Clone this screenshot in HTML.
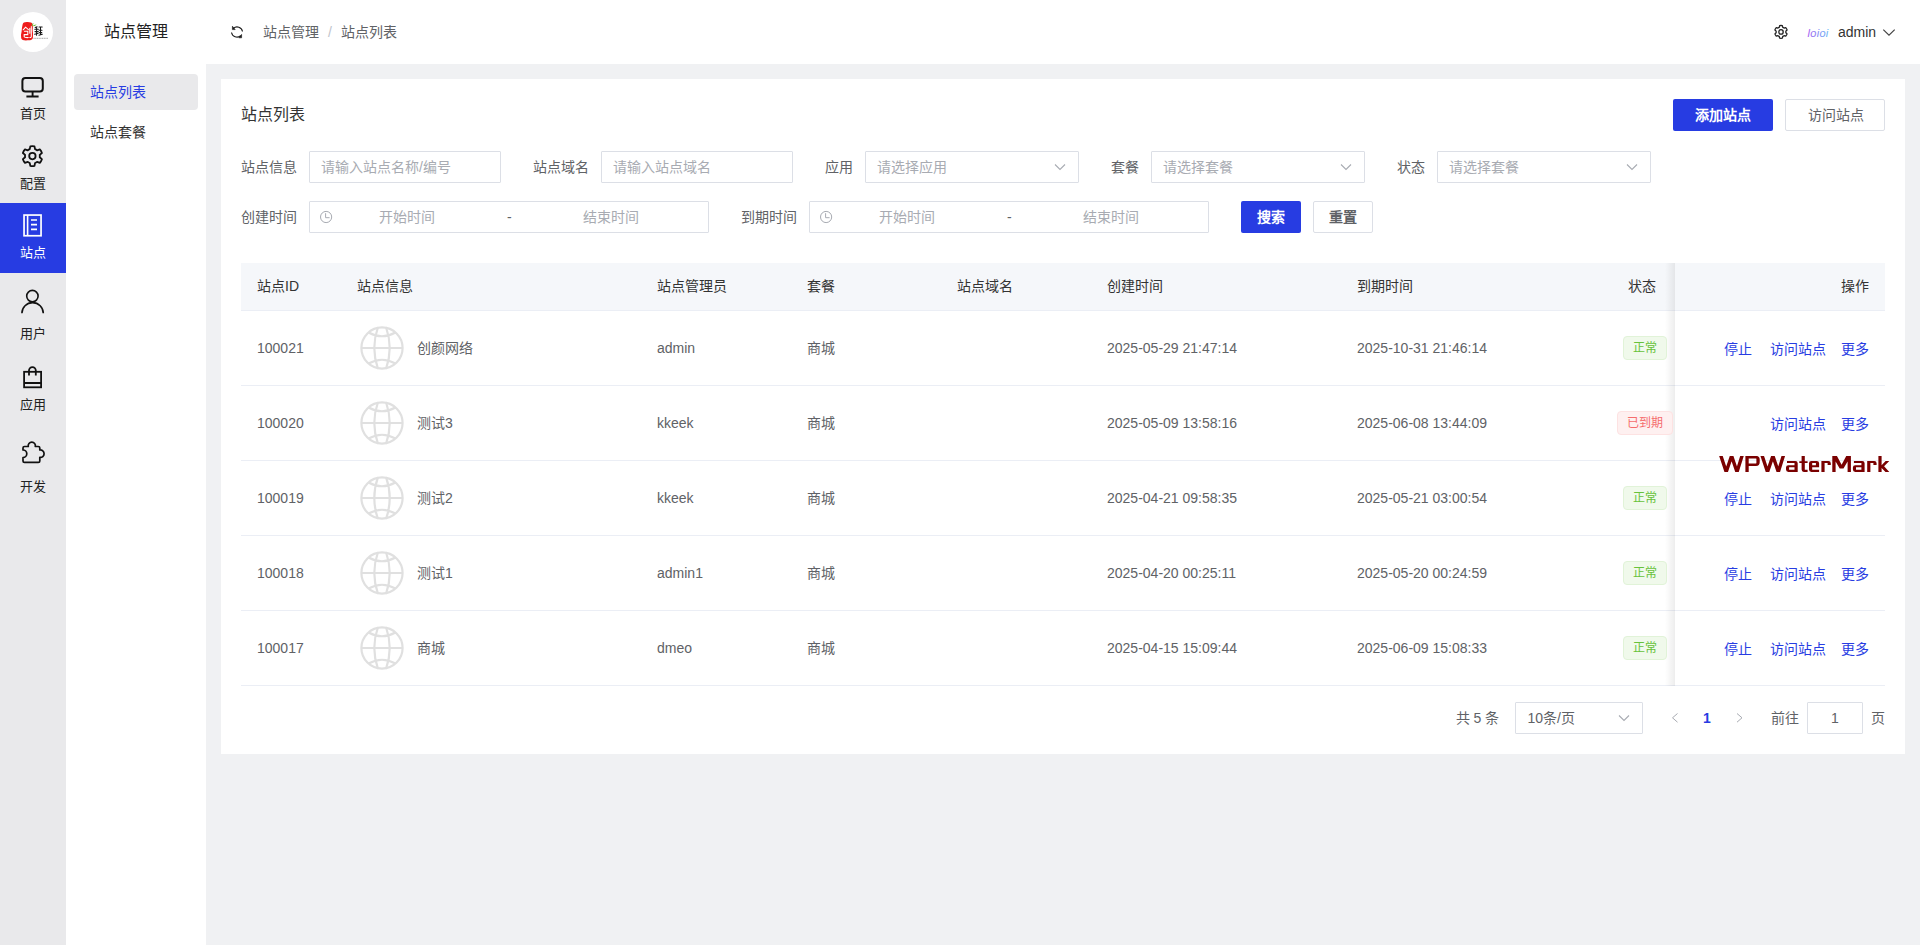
<!DOCTYPE html>
<html lang="zh-CN">
<head>
<meta charset="utf-8">
<style>
*{box-sizing:border-box;margin:0;padding:0}
html,body{width:1920px;height:945px;overflow:hidden;background:#fff}
body{font-family:"Liberation Sans",sans-serif;font-size:14px;color:#333;position:relative}
.a{position:absolute;white-space:nowrap}
svg{position:absolute;left:0;top:0}
</style>
</head>
<body>
<div class="a" style="left:0px;top:0px;width:66px;height:945px;background:#e9e9eb"></div>
<div class="a" style="left:206px;top:64px;width:1714px;height:881px;background:#f0f1f3"></div>
<div class="a" style="left:221px;top:79px;width:1684px;height:675px;background:#fff"></div>
<div class="a" style="left:0px;top:203px;width:66px;height:70px;background:#273ce2"></div>
<div class="a" style="left:2.5px;width:60px;top:104.6px;font-size:13px;line-height:18px;color:#222;text-align:center;">首页</div>
<div class="a" style="left:2.5px;width:60px;top:174.5px;font-size:13px;line-height:18px;color:#222;text-align:center;">配置</div>
<div class="a" style="left:2.5px;width:60px;top:243.6px;font-size:13px;line-height:18px;color:#fff;text-align:center;">站点</div>
<div class="a" style="left:2.5px;width:60px;top:325.4px;font-size:13px;line-height:18px;color:#222;text-align:center;">用户</div>
<div class="a" style="left:2.5px;width:60px;top:395.6px;font-size:13px;line-height:18px;color:#222;text-align:center;">应用</div>
<div class="a" style="left:2.5px;width:60px;top:478px;font-size:13px;line-height:18px;color:#222;text-align:center;">开发</div>
<div class="a" style="left:104px;top:21px;font-size:16px;line-height:22px;color:#222;">站点管理</div>
<div class="a" style="left:263px;top:22px;font-size:14px;line-height:20px;color:#606266;">站点管理</div>
<div class="a" style="left:328px;top:22px;font-size:14px;line-height:20px;color:#c0c4cc;">/</div>
<div class="a" style="left:341px;top:22px;font-size:14px;line-height:20px;color:#606266;">站点列表</div>
<div class="a" style="left:1838px;top:22px;font-size:14px;line-height:20px;color:#333;">admin</div>
<div class="a" style="left:74px;top:74px;width:124px;height:36px;background:#e9e9eb;border-radius:4px"></div>
<div class="a" style="left:90px;top:82.2px;font-size:14px;line-height:20px;color:#273ce2;">站点列表</div>
<div class="a" style="left:90px;top:122px;font-size:14px;line-height:20px;color:#333;">站点套餐</div>
<div class="a" style="left:241px;top:104px;font-size:16px;line-height:22px;color:#333;">站点列表</div>
<div class="a" style="left:1673px;top:99px;width:100px;height:32px;background:#273ce2;border-radius:2px"></div>
<div class="a" style="left:1695px;top:105.3px;font-size:14px;line-height:20px;color:#fff;font-weight:bold">添加站点</div>
<div class="a" style="left:1785px;top:99px;width:100px;height:32px;border:1px solid #dcdfe6;border-radius:2px;background:#fff"></div>
<div class="a" style="left:1807.5px;top:104.8px;font-size:14px;line-height:20px;color:#606266;">访问站点</div>
<div class="a" style="left:241px;top:157px;font-size:14px;line-height:20px;color:#606266;">站点信息</div>
<div class="a" style="left:309px;top:151px;width:192px;height:32px;border:1px solid #dcdfe6;border-radius:1px;background:#fff"></div>
<div class="a" style="left:321px;top:157px;font-size:14px;line-height:20px;color:#a8abb2;">请输入站点名称/编号</div>
<div class="a" style="left:533px;top:157px;font-size:14px;line-height:20px;color:#606266;">站点域名</div>
<div class="a" style="left:601px;top:151px;width:192px;height:32px;border:1px solid #dcdfe6;border-radius:1px;background:#fff"></div>
<div class="a" style="left:613px;top:157px;font-size:14px;line-height:20px;color:#a8abb2;">请输入站点域名</div>
<div class="a" style="left:825px;top:157px;font-size:14px;line-height:20px;color:#606266;">应用</div>
<div class="a" style="left:865px;top:151px;width:214px;height:32px;border:1px solid #dcdfe6;border-radius:1px;background:#fff"></div>
<div class="a" style="left:877px;top:157px;font-size:14px;line-height:20px;color:#a8abb2;">请选择应用</div>
<div class="a" style="left:1111px;top:157px;font-size:14px;line-height:20px;color:#606266;">套餐</div>
<div class="a" style="left:1151px;top:151px;width:214px;height:32px;border:1px solid #dcdfe6;border-radius:1px;background:#fff"></div>
<div class="a" style="left:1163px;top:157px;font-size:14px;line-height:20px;color:#a8abb2;">请选择套餐</div>
<div class="a" style="left:1397px;top:157px;font-size:14px;line-height:20px;color:#606266;">状态</div>
<div class="a" style="left:1437px;top:151px;width:214px;height:32px;border:1px solid #dcdfe6;border-radius:1px;background:#fff"></div>
<div class="a" style="left:1449px;top:157px;font-size:14px;line-height:20px;color:#a8abb2;">请选择套餐</div>
<div class="a" style="left:241px;top:207.3px;font-size:14px;line-height:20px;color:#606266;">创建时间</div>
<div class="a" style="left:309px;top:201px;width:400px;height:32px;border:1px solid #dcdfe6;border-radius:1px;background:#fff"></div>
<div class="a" style="left:379px;top:207px;font-size:14px;line-height:20px;color:#a8abb2;">开始时间</div>
<div class="a" style="left:507px;top:207px;font-size:14px;line-height:20px;color:#606266;">-</div>
<div class="a" style="left:583px;top:207px;font-size:14px;line-height:20px;color:#a8abb2;">结束时间</div>
<div class="a" style="left:741px;top:207.3px;font-size:14px;line-height:20px;color:#606266;">到期时间</div>
<div class="a" style="left:809px;top:201px;width:400px;height:32px;border:1px solid #dcdfe6;border-radius:1px;background:#fff"></div>
<div class="a" style="left:879px;top:207px;font-size:14px;line-height:20px;color:#a8abb2;">开始时间</div>
<div class="a" style="left:1007px;top:207px;font-size:14px;line-height:20px;color:#606266;">-</div>
<div class="a" style="left:1083px;top:207px;font-size:14px;line-height:20px;color:#a8abb2;">结束时间</div>
<div class="a" style="left:1241px;top:201px;width:60px;height:32px;background:#273ce2;border-radius:2px"></div>
<div class="a" style="left:1257px;top:207px;font-size:14px;line-height:20px;color:#fff;font-weight:bold">搜索</div>
<div class="a" style="left:1313px;top:201px;width:60px;height:32px;border:1px solid #dcdfe6;border-radius:2px;background:#fff"></div>
<div class="a" style="left:1329px;top:207px;font-size:14px;line-height:20px;color:#606266;font-weight:bold">重置</div>
<div class="a" style="left:241px;top:263px;width:1644px;height:47px;background:#f5f7fa"></div>
<div class="a" style="left:241px;top:310px;width:1644px;height:1px;background:#ebeef5"></div>
<div class="a" style="left:241px;top:385px;width:1644px;height:1px;background:#ebeef5"></div>
<div class="a" style="left:241px;top:460px;width:1644px;height:1px;background:#ebeef5"></div>
<div class="a" style="left:241px;top:535px;width:1644px;height:1px;background:#ebeef5"></div>
<div class="a" style="left:241px;top:610px;width:1644px;height:1px;background:#ebeef5"></div>
<div class="a" style="left:241px;top:685px;width:1644px;height:1px;background:#ebeef5"></div>
<div class="a" style="left:1665px;top:263px;width:10px;height:423px;background:linear-gradient(to right, rgba(0,0,0,0), rgba(0,0,0,0.07))"></div>
<div class="a" style="left:1675px;top:263px;width:210px;height:47px;background:#f5f7fa"></div>
<div class="a" style="left:1675px;top:311px;width:210px;height:374px;background:#fff"></div>
<div class="a" style="left:1675px;top:385px;width:210px;height:1px;background:#ebeef5"></div>
<div class="a" style="left:1675px;top:460px;width:210px;height:1px;background:#ebeef5"></div>
<div class="a" style="left:1675px;top:535px;width:210px;height:1px;background:#ebeef5"></div>
<div class="a" style="left:1675px;top:610px;width:210px;height:1px;background:#ebeef5"></div>
<div class="a" style="left:1675px;top:685px;width:210px;height:1px;background:#ebeef5"></div>
<div class="a" style="left:257px;top:276.3px;font-size:14px;line-height:20px;color:#333;">站点ID</div>
<div class="a" style="left:357px;top:276.3px;font-size:14px;line-height:20px;color:#333;">站点信息</div>
<div class="a" style="left:657px;top:276.3px;font-size:14px;line-height:20px;color:#333;">站点管理员</div>
<div class="a" style="left:807px;top:276.3px;font-size:14px;line-height:20px;color:#333;">套餐</div>
<div class="a" style="left:957px;top:276.3px;font-size:14px;line-height:20px;color:#333;">站点域名</div>
<div class="a" style="left:1107px;top:276.3px;font-size:14px;line-height:20px;color:#333;">创建时间</div>
<div class="a" style="left:1357px;top:276.3px;font-size:14px;line-height:20px;color:#333;">到期时间</div>
<div class="a" style="right:264.5px;top:276.3px;font-size:14px;line-height:20px;color:#333;text-align:right;">状态</div>
<div class="a" style="right:51px;top:276.3px;font-size:14px;line-height:20px;color:#333;text-align:right;">操作</div>
<div class="a" style="left:257px;top:338px;font-size:14px;line-height:20px;color:#606266;">100021</div>
<div class="a" style="left:417px;top:338px;font-size:14px;line-height:20px;color:#606266;">创颜网络</div>
<div class="a" style="left:657px;top:338px;font-size:14px;line-height:20px;color:#606266;">admin</div>
<div class="a" style="left:807px;top:338px;font-size:14px;line-height:20px;color:#606266;">商城</div>
<div class="a" style="left:1107px;top:338px;font-size:14px;line-height:20px;color:#606266;">2025-05-29 21:47:14</div>
<div class="a" style="left:1357px;top:338px;font-size:14px;line-height:20px;color:#606266;">2025-10-31 21:46:14</div>
<div class="a" style="left:1623px;top:336px;width:44px;height:24px;background:#f0f9eb;border:1px solid #e1f3d8;border-radius:4px"></div>
<div class="a" style="left:1633px;top:340px;font-size:12px;line-height:16px;color:#67c23a;">正常</div>
<div class="a" style="left:1724px;top:339px;font-size:14px;line-height:20px;color:#273ce2;">停止</div>
<div class="a" style="left:1770px;top:339px;font-size:14px;line-height:20px;color:#273ce2;">访问站点</div>
<div class="a" style="left:1841px;top:339px;font-size:14px;line-height:20px;color:#273ce2;">更多</div>
<div class="a" style="left:257px;top:413px;font-size:14px;line-height:20px;color:#606266;">100020</div>
<div class="a" style="left:417px;top:413px;font-size:14px;line-height:20px;color:#606266;">测试3</div>
<div class="a" style="left:657px;top:413px;font-size:14px;line-height:20px;color:#606266;">kkeek</div>
<div class="a" style="left:807px;top:413px;font-size:14px;line-height:20px;color:#606266;">商城</div>
<div class="a" style="left:1107px;top:413px;font-size:14px;line-height:20px;color:#606266;">2025-05-09 13:58:16</div>
<div class="a" style="left:1357px;top:413px;font-size:14px;line-height:20px;color:#606266;">2025-06-08 13:44:09</div>
<div class="a" style="left:1617px;top:411px;width:56px;height:24px;background:#fef0f0;border:1px solid #fde2e2;border-radius:4px"></div>
<div class="a" style="left:1627px;top:415px;font-size:12px;line-height:16px;color:#f56c6c;">已到期</div>
<div class="a" style="left:1770px;top:414px;font-size:14px;line-height:20px;color:#273ce2;">访问站点</div>
<div class="a" style="left:1841px;top:414px;font-size:14px;line-height:20px;color:#273ce2;">更多</div>
<div class="a" style="left:257px;top:488px;font-size:14px;line-height:20px;color:#606266;">100019</div>
<div class="a" style="left:417px;top:488px;font-size:14px;line-height:20px;color:#606266;">测试2</div>
<div class="a" style="left:657px;top:488px;font-size:14px;line-height:20px;color:#606266;">kkeek</div>
<div class="a" style="left:807px;top:488px;font-size:14px;line-height:20px;color:#606266;">商城</div>
<div class="a" style="left:1107px;top:488px;font-size:14px;line-height:20px;color:#606266;">2025-04-21 09:58:35</div>
<div class="a" style="left:1357px;top:488px;font-size:14px;line-height:20px;color:#606266;">2025-05-21 03:00:54</div>
<div class="a" style="left:1623px;top:486px;width:44px;height:24px;background:#f0f9eb;border:1px solid #e1f3d8;border-radius:4px"></div>
<div class="a" style="left:1633px;top:490px;font-size:12px;line-height:16px;color:#67c23a;">正常</div>
<div class="a" style="left:1724px;top:489px;font-size:14px;line-height:20px;color:#273ce2;">停止</div>
<div class="a" style="left:1770px;top:489px;font-size:14px;line-height:20px;color:#273ce2;">访问站点</div>
<div class="a" style="left:1841px;top:489px;font-size:14px;line-height:20px;color:#273ce2;">更多</div>
<div class="a" style="left:257px;top:563px;font-size:14px;line-height:20px;color:#606266;">100018</div>
<div class="a" style="left:417px;top:563px;font-size:14px;line-height:20px;color:#606266;">测试1</div>
<div class="a" style="left:657px;top:563px;font-size:14px;line-height:20px;color:#606266;">admin1</div>
<div class="a" style="left:807px;top:563px;font-size:14px;line-height:20px;color:#606266;">商城</div>
<div class="a" style="left:1107px;top:563px;font-size:14px;line-height:20px;color:#606266;">2025-04-20 00:25:11</div>
<div class="a" style="left:1357px;top:563px;font-size:14px;line-height:20px;color:#606266;">2025-05-20 00:24:59</div>
<div class="a" style="left:1623px;top:561px;width:44px;height:24px;background:#f0f9eb;border:1px solid #e1f3d8;border-radius:4px"></div>
<div class="a" style="left:1633px;top:565px;font-size:12px;line-height:16px;color:#67c23a;">正常</div>
<div class="a" style="left:1724px;top:564px;font-size:14px;line-height:20px;color:#273ce2;">停止</div>
<div class="a" style="left:1770px;top:564px;font-size:14px;line-height:20px;color:#273ce2;">访问站点</div>
<div class="a" style="left:1841px;top:564px;font-size:14px;line-height:20px;color:#273ce2;">更多</div>
<div class="a" style="left:257px;top:638px;font-size:14px;line-height:20px;color:#606266;">100017</div>
<div class="a" style="left:417px;top:638px;font-size:14px;line-height:20px;color:#606266;">商城</div>
<div class="a" style="left:657px;top:638px;font-size:14px;line-height:20px;color:#606266;">dmeo</div>
<div class="a" style="left:807px;top:638px;font-size:14px;line-height:20px;color:#606266;">商城</div>
<div class="a" style="left:1107px;top:638px;font-size:14px;line-height:20px;color:#606266;">2025-04-15 15:09:44</div>
<div class="a" style="left:1357px;top:638px;font-size:14px;line-height:20px;color:#606266;">2025-06-09 15:08:33</div>
<div class="a" style="left:1623px;top:636px;width:44px;height:24px;background:#f0f9eb;border:1px solid #e1f3d8;border-radius:4px"></div>
<div class="a" style="left:1633px;top:640px;font-size:12px;line-height:16px;color:#67c23a;">正常</div>
<div class="a" style="left:1724px;top:639px;font-size:14px;line-height:20px;color:#273ce2;">停止</div>
<div class="a" style="left:1770px;top:639px;font-size:14px;line-height:20px;color:#273ce2;">访问站点</div>
<div class="a" style="left:1841px;top:639px;font-size:14px;line-height:20px;color:#273ce2;">更多</div>
<div class="a" style="left:1455.5px;top:708px;font-size:14px;line-height:20px;color:#606266;">共 5 条</div>
<div class="a" style="left:1515px;top:702px;width:128px;height:32px;border:1px solid #dcdfe6;border-radius:1px;background:#fff"></div>
<div class="a" style="left:1527.5px;top:708px;font-size:14px;line-height:20px;color:#606266;">10条/页</div>
<div class="a" style="left:1703px;top:708.3px;font-size:14px;line-height:20px;color:#273ce2;font-weight:bold">1</div>
<div class="a" style="left:1771px;top:708px;font-size:14px;line-height:20px;color:#606266;">前往</div>
<div class="a" style="left:1807px;top:702px;width:56px;height:32px;border:1px solid #dcdfe6;border-radius:1px;background:#fff"></div>
<div class="a" style="left:1815.0px;width:40px;top:708px;font-size:14px;line-height:20px;color:#606266;text-align:center;">1</div>
<div class="a" style="left:1871px;top:708px;font-size:14px;line-height:20px;color:#606266;">页</div>
<svg width="1920" height="945" viewBox="0 0 1920 945">
<circle cx="33" cy="32" r="20" fill="#fff"/>
<path d="M22.6 24.5Q23.2 22 27 22.1Q31.6 21.9 32.6 24Q33.2 27 32.6 30Q33.4 34 32.9 38Q32.2 40.6 27.5 40.3Q22.2 40.8 21.2 38.2Q20.6 35 21.6 31.5Q21.9 27.5 22.6 24.5Z" fill="#ee1c1c"/>
<path d="M23.2 29.8L25.6 27.2L28.4 29.6M24.4 31.3H27.8V34.6H24.2V36.8Q24.6 37.8 28.3 37.6M29.8 28.2V33.2M31.3 26.6V36.3Q31.2 37.9 29.8 37.5" fill="none" stroke="#fff" stroke-width="1.05" stroke-linecap="round"/>
<path d="M31.6 26.2Q31.8 23.6 33.6 23.1Q33.4 25.4 31.6 26.2ZM32.2 26.3Q34.1 24.2 36.6 24.4Q34.9 26.6 32.2 26.3Z" fill="#6cbf3a"/>
<path d="M35.2 27.6L37.1 26.8M34.8 29.3H38.4M36.6 27.5V35.2M35 31.6H38.3M34.6 34.2L38.3 33.2M39 27H42.2M40.5 27V34.5M39.2 30.2H42M39.4 32.6H41.8M38.9 35.2L42.3 34.2" fill="none" stroke="#1a1a1a" stroke-width="1.05" stroke-linecap="round"/>
<path d="M33.5 38.3H48" stroke="#9a9a9a" stroke-width="0.9" stroke-dasharray="1.2 0.5"/>
<rect x="22.4" y="78" width="20.4" height="13.4" rx="3" fill="none" stroke="#111" stroke-width="2"/>
<path d="M32.6 91.4V96.5M26.4 96.5H38.6" fill="none" stroke="#111" stroke-width="1.9"/>
<path d="M29.75 149.19L30.32 146.32A10.0 10.0 0 0 1 34.48 146.32L35.05 149.19A7.4 7.4 0 0 1 37.06 150.35L39.83 149.41A10.0 10.0 0 0 1 41.91 153.01L39.71 154.94A7.4 7.4 0 0 1 39.71 157.26L41.91 159.19A10.0 10.0 0 0 1 39.83 162.79L37.06 161.85A7.4 7.4 0 0 1 35.05 163.01L34.48 165.88A10.0 10.0 0 0 1 30.32 165.88L29.75 163.01A7.4 7.4 0 0 1 27.74 161.85L24.97 162.79A10.0 10.0 0 0 1 22.89 159.19L25.09 157.26A7.4 7.4 0 0 1 25.09 154.94L22.89 153.01A10.0 10.0 0 0 1 24.97 149.41L27.74 150.35A7.4 7.4 0 0 1 29.75 149.19Z" fill="none" stroke="#111" stroke-width="1.8" stroke-linejoin="round"/>
<circle cx="32.4" cy="156.1" r="3.2" fill="none" stroke="#111" stroke-width="1.8"/>
<rect x="24.05" y="215.05" width="17" height="20.7" fill="none" stroke="#fff" stroke-width="1.7"/>
<path d="M27.6 215V236M31 220H37M31 224.6H37M31 229.4H37" fill="none" stroke="#fff" stroke-width="1.6"/>
<circle cx="32.4" cy="296.1" r="5.7" fill="none" stroke="#111" stroke-width="1.6"/>
<path d="M21.9 313.2A10.7 10.6 0 0 1 43.3 313.2" fill="none" stroke="#111" stroke-width="1.6"/>
<rect x="24.1" y="371.8" width="17" height="15.5" fill="none" stroke="#111" stroke-width="1.8"/>
<path d="M24.1 383H41.1M29 375.4V370.5A3.4 3.4 0 0 1 35.8 370.5V375.4" fill="none" stroke="#111" stroke-width="1.8"/>
<path d="M24.5 446.5H28.3A3.6 3.6 0 1 1 35.3 446.5H38.3A1.5 1.5 0 0 1 39.8 448V450A3.74 3.74 0 1 1 39.8 457.4V460.9A1.5 1.5 0 0 1 38.3 462.4H24.5A1.5 1.5 0 0 1 23 460.9V457.6A3.8 3.8 0 1 0 23 450V448A1.5 1.5 0 0 1 24.5 446.5Z" fill="none" stroke="#111" stroke-width="1.7" stroke-linejoin="round"/>
<path d="M233.4 28.3A5.5 5.5 0 0 1 242.5 31.5M231.5 32.5A5.5 5.5 0 0 0 240.6 35.7" fill="none" stroke="#1a1a1a" stroke-width="1.1"/>
<path d="M232.4 26.2L232.4 29.6L235.2 29.6ZM241.6 37.8L241.6 34.4L238.8 37.8Z" fill="#1a1a1a" stroke="#1a1a1a" stroke-width="0.6" stroke-linejoin="round"/>
<path d="M1779.24 27.33L1779.67 25.64A6.4 6.4 0 0 1 1782.33 25.64L1782.76 27.33A4.9 4.9 0 0 1 1784.08 28.09L1785.76 27.62A6.4 6.4 0 0 1 1787.09 29.92L1785.84 31.13A4.9 4.9 0 0 1 1785.84 32.67L1787.09 33.88A6.4 6.4 0 0 1 1785.76 36.18L1784.08 35.71A4.9 4.9 0 0 1 1782.76 36.47L1782.33 38.16A6.4 6.4 0 0 1 1779.67 38.16L1779.24 36.47A4.9 4.9 0 0 1 1777.92 35.71L1776.24 36.18A6.4 6.4 0 0 1 1774.91 33.88L1776.16 32.67A4.9 4.9 0 0 1 1776.16 31.13L1774.91 29.92A6.4 6.4 0 0 1 1776.24 27.62L1777.92 28.09A4.9 4.9 0 0 1 1779.24 27.33Z" fill="none" stroke="#222" stroke-width="1.3" stroke-linejoin="round"/>
<circle cx="1781" cy="31.9" r="2.2" fill="none" stroke="#222" stroke-width="1.3"/>
<defs><linearGradient id="lg" x1="0" x2="1"><stop offset="0" stop-color="#a35cf0"/><stop offset="1" stop-color="#69b7f5"/></linearGradient></defs>
<text x="1807.5" y="37" font-family="Liberation Sans" font-size="11" font-style="italic" fill="url(#lg)" letter-spacing="0.3">loioi</text>
<path d="M1883.3 29.6L1889 35.2L1894.7 29.6" fill="none" stroke="#444" stroke-width="1.2"/>
<path d="M1055 164.5L1060 169.5L1065 164.5" fill="none" stroke="#a8abb2" stroke-width="1.1"/>
<path d="M1341 164.5L1346 169.5L1351 164.5" fill="none" stroke="#a8abb2" stroke-width="1.1"/>
<path d="M1627 164.5L1632 169.5L1637 164.5" fill="none" stroke="#a8abb2" stroke-width="1.1"/>
<circle cx="326.1" cy="217" r="5.6" fill="none" stroke="#a8abb2" stroke-width="1"/>
<path d="M325.6 213.2V217.7H329.6" fill="none" stroke="#a8abb2" stroke-width="1"/>
<circle cx="826.1" cy="217" r="5.6" fill="none" stroke="#a8abb2" stroke-width="1"/>
<path d="M825.6 213.2V217.7H829.6" fill="none" stroke="#a8abb2" stroke-width="1"/>
<g fill="none" stroke="#e0e0e0" stroke-width="2.2"><circle cx="382" cy="348" r="20.6"/><path d="M361.4 348H402.6M378 327Q370.6 348 378 369M386 327Q393.4 348 386 369M368.6 332.5Q382 340 395.4 332.5M368.6 363.5Q382 356 395.4 363.5"/></g>
<g fill="none" stroke="#e0e0e0" stroke-width="2.2"><circle cx="382" cy="423" r="20.6"/><path d="M361.4 423H402.6M378 402Q370.6 423 378 444M386 402Q393.4 423 386 444M368.6 407.5Q382 415 395.4 407.5M368.6 438.5Q382 431 395.4 438.5"/></g>
<g fill="none" stroke="#e0e0e0" stroke-width="2.2"><circle cx="382" cy="498" r="20.6"/><path d="M361.4 498H402.6M378 477Q370.6 498 378 519M386 477Q393.4 498 386 519M368.6 482.5Q382 490 395.4 482.5M368.6 513.5Q382 506 395.4 513.5"/></g>
<g fill="none" stroke="#e0e0e0" stroke-width="2.2"><circle cx="382" cy="573" r="20.6"/><path d="M361.4 573H402.6M378 552Q370.6 573 378 594M386 552Q393.4 573 386 594M368.6 557.5Q382 565 395.4 557.5M368.6 588.5Q382 581 395.4 588.5"/></g>
<g fill="none" stroke="#e0e0e0" stroke-width="2.2"><circle cx="382" cy="648" r="20.6"/><path d="M361.4 648H402.6M378 627Q370.6 648 378 669M386 627Q393.4 648 386 669M368.6 632.5Q382 640 395.4 632.5M368.6 663.5Q382 656 395.4 663.5"/></g>
<clipPath id="wmc"><rect x="1700" y="455.9" width="200" height="16"/></clipPath>
<g clip-path="url(#wmc)"><path d="M1719.28 451L1726.2 471.9L1731.6 455.9L1737.0 471.9L1743.53 451" fill="none" stroke="#7a0000" stroke-width="3.4" stroke-linejoin="miter" stroke-miterlimit="10"/><path d="M1760.58 451L1767.5 471.9L1772.8999999999999 455.9L1778.3 471.9L1784.83 451" fill="none" stroke="#7a0000" stroke-width="3.4" stroke-linejoin="miter" stroke-miterlimit="10"/><path d="M1745.4 455.9H1756.0Q1759.7 455.9 1759.7 459.59999999999997V462.2Q1759.7 465.9 1756.0 465.9H1748.7V471.9H1745.4ZM1748.7 458.4V463.4H1756.0Q1756.4 463.4 1756.4 463.0V458.79999999999995Q1756.4 458.4 1756.0 458.4Z" fill="#7a0000" fill-rule="evenodd"/><path d="M1787.0 460.9H1795.3Q1797.7 460.9 1797.7 463.29999999999995V471.9H1788.4Q1786.0 471.9 1786.0 469.5V467.5Q1786.0 465.2 1788.4 465.2H1794.5V463.0H1787.0ZM1789.1 467.2V469.79999999999995H1794.5V467.2Z" fill="#7a0000" fill-rule="evenodd"/><path d="M1853.9 460.9H1862.2Q1864.6000000000001 460.9 1864.6000000000001 463.29999999999995V471.9H1855.3000000000002Q1852.9 471.9 1852.9 469.5V467.5Q1852.9 465.2 1855.3000000000002 465.2H1861.4V463.0H1853.9ZM1856.0 467.2V469.79999999999995H1861.4V467.2Z" fill="#7a0000" fill-rule="evenodd"/><path d="M1801.6 455.9H1804.8V461.2H1807.6V463.09999999999997H1804.8V469.7H1807.6V471.9H1803.8999999999999Q1801.6 471.9 1801.6 469.59999999999997V463.09999999999997H1799.3V461.2H1801.6Z" fill="#7a0000"/><path d="M1811.4 460.9H1816.6999999999998Q1819.1 460.9 1819.1 463.29999999999995V467.2H1812.2V469.79999999999995H1819.1V471.9H1811.4Q1809.0 471.9 1809.0 469.5V463.29999999999995Q1809.0 460.9 1811.4 460.9ZM1812.2 463.0V465.2H1815.8999999999999V463.0Z" fill="#7a0000" fill-rule="evenodd"/><path d="M1821.4 460.9H1828.4Q1830.8000000000002 460.9 1830.8000000000002 463.29999999999995V464.9H1827.6000000000001V463.0H1824.6000000000001V471.9H1821.4Z" fill="#7a0000"/><path d="M1867.2 460.9H1874.2Q1876.6000000000001 460.9 1876.6000000000001 463.29999999999995V464.9H1873.4V463.0H1870.4V471.9H1867.2Z" fill="#7a0000"/><path d="M1832.3 455.9H1836.8999999999999L1841.6 464.7L1846.3 455.9H1850.8999999999999V471.9H1847.6V461.4L1843.5 468.5H1839.6999999999998L1835.6 461.4V471.9H1832.3Z" fill="#7a0000"/><path d="M1878.4 455.9H1881.6000000000001V465.2L1885.6000000000001 460.9H1889.3000000000002L1884.1000000000001 466.2L1889.3000000000002 471.9H1885.5L1881.6000000000001 468.0V471.9H1878.4Z" fill="#7a0000"/></g>
<path d="M1619 715.5L1624 720.5L1629 715.5" fill="none" stroke="#a8abb2" stroke-width="1.1"/>
<path d="M1677.5 713.5L1672.5 717.8L1677.5 722.2" fill="none" stroke="#a8abb2" stroke-width="1"/>
<path d="M1737 713.5L1742 717.8L1737 722.2" fill="none" stroke="#a8abb2" stroke-width="1"/>
</svg>
</body>
</html>
